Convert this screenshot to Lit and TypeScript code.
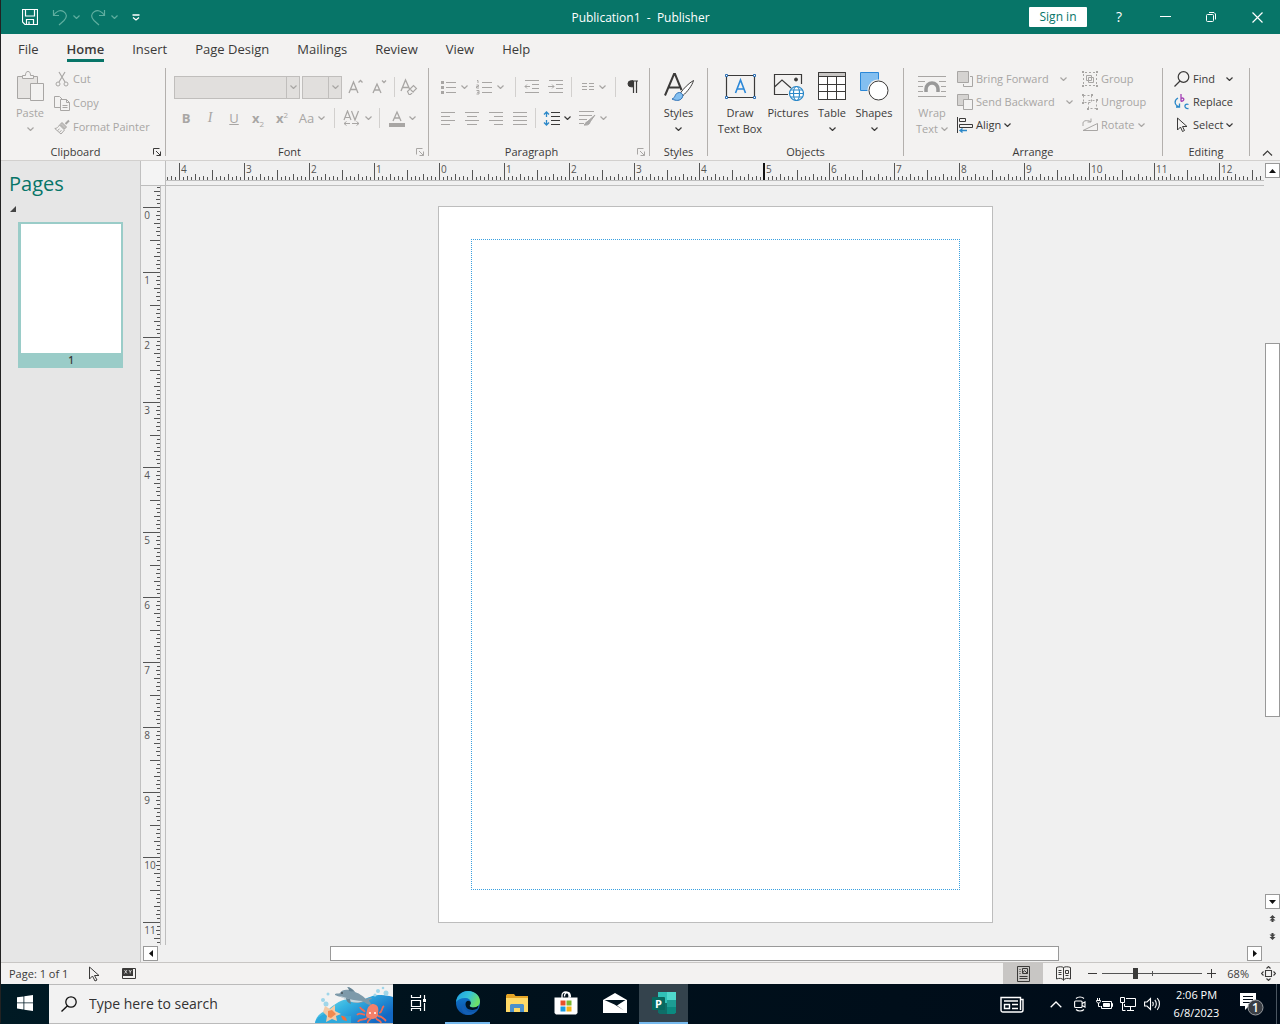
import { LitElement, html, svg, css, nothing } from "lit";
import { customElement, property, state } from "lit/decorators.js";
import { classMap } from "lit/directives/class-map.js";

const draw = (w: number, h: number, body: unknown) => html`<svg
  width=${w} height=${h} viewBox="0 0 ${w} ${h}" fill="none" stroke="currentColor"
  stroke-width="1" aria-hidden="true">${body}</svg>`;

const chevron = () => draw(7, 4, svg`<path d="M.5 .5 3.5 3.5 6.5 .5" stroke-width="1.2"/>`);

const launcher = () => draw(8, 8, svg`<path d="M.5 6.500V.5H6.500M3 3l4.500 4.500M7.500 3.500v4h-4"/>`);

const icons: Record<string, () => unknown> = {
  save: () => draw(16, 16, svg`<path d="M.5.5h15v15H3L.5 13zM3.500.500v6.500h9V.500M4.500 15.500v-5h7v5M7 12.500v3" stroke-width="1.2"/>`),
  undo: () => draw(16, 17, svg`<path d="M1.500 1v5.500H7M1.500 6.500C4 2.500 8 .500 11.500 2.500c4 2.500 3.500 6 .5 9L7 16" stroke-width="1.2"/>`),
  redo: () => draw(16, 17, svg`<path d="M14.500 1v5.500H9M14.500 6.500C12 2.500 8 .500 4.500 2.500c-4 2.500-3.500 6-.5 9L9 16" stroke-width="1.2"/>`),
  customize: () => draw(8, 7, svg`<path d="M.5 1h7M1 3.500l3 2.500 3-2.500" stroke-width="1.300"/>`),
  paste: () => draw(28, 32, svg`
    <path d="M2 7h19v6h-7v15H2z" fill="#e6e4e2" stroke="none"/>
    <path d="M6 6.500H1.500v22H14M17 6.500h4.500V13"/>
    <path d="M6.500 8.500v-3h3c0-3 1-4 2.500-4s2.500 1 2.500 4h3v3z" fill="#f3f2f1"/>
    <path d="M14.500 13.500h13v17h-13z" fill="#f3f2f1"/>`),
  cut: () => draw(16, 16, svg`<path d="M5 1l6 10M11 1 5 11" stroke-width="1.200"/><circle cx="4" cy="13" r="2"/><circle cx="12" cy="13" r="2"/>`),
  copy: () => draw(16, 16, svg`<path d="M6 12.500H.5v-11h5L8 4M6.500 4.500h6l3 3v8h-9zM12.500 4.500v3h3M8.500 10.500h5M8.500 12.500h5"/>`),
  painter: () => draw(16, 16, svg`<path d="M15 1.500 11.500 5" stroke-width="2"/><path d="M8 3.500l4.500 4.500-2 2L6 5.500z" fill="#c4c2c0"/><path d="M5.500 6 10.500 11 7 15 .8 9.500c2 0 3.500-1.500 4.700-3.500zM3.500 11.500l2-1.500M5.500 13l2-1.500"/>`),
  grow: () => draw(16, 16, svg`<path d="M1 14 5.500 3 10 14M2.500 10.500h6M10.500 3.500l2-2 2 2" stroke-width="1.300"/>`),
  shrink: () => draw(16, 16, svg`<path d="M1 14 5 5 9 14M2.500 11h5M10 1.500l2 2 2-2" stroke-width="1.300"/>`),
  clear: () => draw(18, 18, svg`<path d="M1 13 5.500 2 10 12M2.500 9.500h6" stroke-width="1.300"/><path d="M7.500 13.500l6-6 3 3-6 6H9zM10 11l3.500 3.500" fill="#f3f2f1" stroke-width="1.100"/>`),
  bullets: () => draw(17, 14, svg`<path d="M6 2.500h10M6 7.500h10M6 12.500h10"/><path d="M1 1h3v3H1zM1 6h3v3H1zM1 11h3v3H1z" fill="currentColor" stroke="none"/>`),
  numbers: () => draw(17, 16, svg`<path d="M6 3.500h10M6 8.500h10M6 13.500h10"/><path d="M1 1.500h1V4M.5 6h2v1.500h-2V9h2.500M.5 11.500h2.500v3.500H.5M1 13.300h2"/>`),
  outdent: () => draw(16, 14, svg`<path d="M1 .500h14M8 4.500h7M8 8.500h7M1 12.500h14M6 6.500H1M3 4.500l-2 2 2 2"/>`),
  indent: () => draw(16, 14, svg`<path d="M1 .500h14M8 4.500h7M8 8.500h7M1 12.500h14M0 6.500h6M4 4.500l2 2-2 2"/>`),
  columns: () => draw(14, 8, svg`<path d="M1 .500h5M1 3.500h5M1 6.500h5M8 .500h5M8 3.500h5M8 6.500h5"/>`),
  pilcrow: () => draw(11, 14, svg`<path d="M5 1h6M6.500 1v12M9.500 1v12" stroke-width="1.200"/><path d="M6 .800H4a3 3 0 0 0 0 6h2z" fill="currentColor"/>`),
  left: () => draw(14, 14, svg`<path d="M0 1.500h14M0 5.500h9M0 9.500h14M0 13.500h9"/>`),
  center: () => draw(14, 14, svg`<path d="M0 1.500h14M2 5.500h10M0 9.500h14M2 13.500h10"/>`),
  right: () => draw(14, 14, svg`<path d="M0 1.500h14M5 5.500h9M0 9.500h14M5 13.500h9"/>`),
  justify: () => draw(14, 14, svg`<path d="M0 1.500h14M0 5.500h14M0 9.500h14M0 13.500h14"/>`),
  spacing: () => draw(17, 15, svg`<path d="M8 1.500h9M8 5.500h9M8 9.500h9M8 13.500h9" stroke-width="1.200"/><path d="M3.500 1v5M3.500 9v5M1 3.500 3.500 1 6 3.500M1 11.500 3.500 14 6 11.500" stroke="#2b88c8" stroke-width="1.300"/>`),
  effects: () => draw(17, 16, svg`<path d="M0 1.500h15M0 5.500h13M0 9.500h8M0 13.500h5"/><path d="M16 5 8 12c-2 0-1 2.500-3 3 4 .500 6-1 6-3z" fill="#aaa"/>`),
  kerning: () => draw(18, 17, svg`<path d="M1 10 4.500 1 8 10M2.200 7.500h4.500M8.500 1l3.500 9L15.500 1" stroke-width="1.200"/><path d="M1 13.500h6M9 13.500h7M3.500 11.500l-2.500 2 2.500 2M13.500 11.500l2.500 2-2.500 2"/>`),
  fontColor: () => draw(16, 17, svg`<path d="M4 11 8 2l4 9M5.500 8h5" stroke-width="1.300"/><path d="M0 13h16v4H0z" fill="currentColor" stroke="none"/>`),
  styles: () => draw(32, 32, svg`<path d="M2 25.500 11 4h1l6.500 16M5.500 17.500h11" stroke-width="2"/>
    <path d="M30.500 10.500C26 13 20 19 17.500 23l2.500 2.500C24 22 29 16 30.500 10.500z" fill="#fff"/>
    <path d="M9 29c4-1 2-6 7.500-6.500 3 .500 4 3 2.500 5.500-2 3-6 3-10 1z" fill="#83bff0" stroke="#2b6fb5"/>`),
  textbox: () => draw(32, 28, svg`<path d="M2.500 3.500h28v22h-28z" stroke-width="1.200"/><path d="M11.500 21 16.500 8l5 13M13 17h7" stroke="#2b88d8" stroke-width="1.600"/>
    <path d="M1.500 2.500h2v2h-2zM29.500 2.500h2v2h-2zM1.500 24.500h2v2h-2zM29.500 24.500h2v2h-2z" fill="#fff" stroke="#2b6fb5"/>`),
  pictures: () => draw(32, 30, svg`<path d="M16 23.500H2.500v-20h27V13M2.500 16 10 9l9 8" stroke-width="1.200"/><circle cx="24" cy="8.500" r="1.500" fill="currentColor"/>
    <g stroke="#2b88c8" stroke-width="1.200"><circle cx="24.500" cy="22.500" r="7" fill="#fff"/><ellipse cx="24.500" cy="22.500" rx="3" ry="7"/><path d="M17.500 22.500h14M18.500 19h12M18.500 26h12"/></g>`),
  table: () => draw(28, 28, svg`<path d="M.5.500h27v27H.5z" fill="#fff"/><path d="M1 1h26v4H1z" fill="#c8c6c4" stroke="none"/><path d="M.5.500h27v27H.5zM.5 4.500h27M.5 12.500h27M.5 19.500h27M9.500 5v22.500M18.500 5v22.500"/>`),
  shapes: () => draw(29, 29, svg`<path d="M.5.500h18v18H.5z" fill="#83bff0" stroke="#2b88d8"/><circle cx="18.500" cy="18.500" r="11" fill="#f3f2f1" stroke="none"/><circle cx="18.500" cy="18.500" r="9.500" fill="#fff"/>`),
  wrap: () => draw(28, 24, svg`<path d="M0 2.500h28M0 7.500h7M21 7.500h7M0 12.500h5M23 12.500h5M0 17.500h5M23 17.500h5M0 22.500h28"/><path d="M8 18v-3a6 6 0 0 1 12 0v3" stroke-width="3.500" stroke="#999"/>`),
  forward: () => draw(16, 16, svg`<path d="M.5.500h11v11H.5z" fill="#d5d3d1"/><path d="M13 5.500h2.500v10h-9V13"/>`),
  backward: () => draw(16, 16, svg`<path d="M.5.500h11v11H.5z" fill="#d5d3d1"/><path d="M6.500 5.500h9v10h-9z" fill="#f3f2f1"/>`),
  align: () => draw(16, 16, svg`<path d="M.5 0v16M2.500 1.500h6v3h-6zM2.500 7.500h13v3h-13z"/><path d="M10 13.500H3M5.500 11.500l-2.500 2 2.500 2" stroke="#2b88c8" stroke-width="1.300"/>`),
  group: () => draw(16, 16, svg`<path d="M1.500 3v10M14.500 3v10M3 1.500h10M3 14.500h10" stroke-dasharray="2 2"/><path d="M4.500 4.500h5v5h-5zM6.500 6.500h5v5h-5z"/><path d="M0 0h2v2H0zM14 0h2v2h-2zM0 14h2v2H0zM14 14h2v2h-2z" fill="currentColor" stroke="none"/>`),
  ungroup: () => draw(16, 16, svg`<path d="M1.500 1.500h8v7h-8zM6.500 6.500h8v8h-8z" stroke-dasharray="2 2"/><path d="M0 0h2v2H0zM9 0h2v2H9zM0 8h2v2H0zM14 5h2v2h-2zM5 14h2v2H5zM14 14h2v2h-2z" fill="currentColor" stroke="none"/>`),
  rotate: () => draw(16, 14, svg`<path d="M1 12.500h14.500V5.500zM1 8V5c0-3 6-3 8-1M9 .500V4H5.500"/>`),
  find: () => draw(16, 16, svg`<circle cx="9.500" cy="6" r="5.300" stroke-width="1.200"/><path d="M6 10 .500 15.500" stroke-width="1.300"/>`),
  replace: () => draw(16, 16, svg`<g stroke-width="1.300"><path d="M7 0v7.500M7 4.500c3-2 4.500 2.800 0 2.800" stroke="#a33fb5"/><path d="M4 4C0 6 0 11 5 12.500M5.500 9.500v3.500H2" stroke="#2b88c8"/><path d="M14.500 10.500c-4-2-5.500 4.500 0 4" stroke="#2b88c8"/></g>`),
  select: () => draw(12, 15, svg`<path d="M1.500 1v12l3-3 2 4.500 2-1L6.500 9.500H11z"/>`),
  minimize: () => draw(11, 11, svg`<path d="M0 4.500h11"/>`),
  restore: () => draw(10, 10, svg`<rect x=".5" y="2.500" width="7" height="7" rx="1"/><path d="M3 .500h5l1.500 1.500v5.500"/>`),
  close: () => draw(11, 11, svg`<path d="M.5.500l10 10M10.500.500l-10 10" stroke-width="1.200"/>`),
  collapse: () => draw(11, 6, svg`<path d="M1 5.500 5.500 1 10 5.500" stroke-width="1.200"/>`),
  expander: () => draw(6, 6, svg`<path d="M6 0v6H0z" fill="#444" stroke="none"/>`),
  pointer: () => draw(12, 16, svg`<path d="M1.500 1v12l3-3 2.500 5 2-1-2.500-4.500H11z"/>`),
  xy: () => draw(14, 11, svg`<path d="M.5.500h13v10H.5z"/><path d="M1 1h10v7H1z" fill="currentColor" stroke="none"/><path d="M2.500 2l2.500 3.500M5 2 2.500 5.500M7 2l1.200 2L9.500 2M8.200 4v1.500" stroke="#fff" stroke-width=".7"/>`),
  single: () => draw(13, 16, svg`<path d="M.5.500h12v15H.5zM2.500 3.500h1M2.500 5.500h1M2.500 7.500h1M5.500 2.500h5v5h-5zM5.500 7l2-2.500 3 3M2.500 10.500h8M2.500 12.500h8"/>`),
  spread: () => draw(15, 15, svg`<path d="M7.500 1.500v13M7.500 1.500C6 .500 3 .500.500 1.500v11.500C3 12 6 12 7.500 14M7.500 1.500C9 .500 12 .500 14.500 1.500v11.500C12 12 9 12 7.500 14M2.500 4.500h3M2.500 6.500h3M2.500 8.500h3M9.500 4.500h3v3h-3zM9.500 9.500h3"/>`),
  minus: () => draw(9, 9, svg`<path d="M0 4.500h9"/>`),
  plus: () => draw(9, 9, svg`<path d="M0 4.500h9M4.500 0v9"/>`),
  fit: () => draw(15, 15, svg`<path d="M4.500 4.500h6v6h-6zM5.500 2.500l2-2 2 2M5.500 12.500l2 2 2-2M2.500 5.500l-2 2 2 2M12.500 5.500l2 2-2 2" stroke-width="1.100"/>`),
  windows: () => draw(16, 16, svg`<path d="M0 2.300 6.500 1.400v6.100H0zM7.300 1.300 16 0v7.500H7.300zM0 8.300h6.500v6.200L0 13.600zM7.300 8.300H16V16l-8.700-1.300z" fill="#fff" stroke="none"/>`),
  search: () => draw(16, 16, svg`<circle cx="10" cy="6" r="5.200" stroke-width="1.300"/><path d="M6.500 9.800.5 15.500" stroke-width="1.400"/>`),
  taskview: () => draw(18, 16, svg`<g stroke="#fff"><path d="M1.500 0v2.500h9V0M1.500 5.500h9v6h-9zM1.500 16v-2.500h9V16M14.500 0v4M14.500 8v8" stroke-width="1.200"/><path d="M13 4h3v3h-3z" fill="#fff" stroke="none"/></g>`),
  edge: () => draw(24, 24, svg`<defs>
      <linearGradient id="ea" x1="0" y1="0" x2="1" y2=".4"><stop offset="0" stop-color="#1b9de2"/><stop offset=".55" stop-color="#35c1d8"/><stop offset="1" stop-color="#6be06a"/></linearGradient>
      <linearGradient id="eb" x1="0" y1="0" x2="0" y2="1"><stop offset="0" stop-color="#1180d4"/><stop offset="1" stop-color="#0b4fa5"/></linearGradient></defs>
    <g stroke="none"><circle cx="12" cy="12" r="12" fill="url(#eb)"/>
    <path d="M.1 11C.8 4 6 0 12 0c7.500 0 12 5.200 12 10.200 0 4-3 6.300-6.500 6.300-3 0-4.500-1.300-3.500-2.500 1.800-2.200.6-6.500-4-7C5.500 6.600 1.500 8.500.1 11z" fill="url(#ea)"/>
    <path d="M8.500 12.500c-1.500 5 3 9.500 8.500 8.500 2-.4 3.500-1.200 4.700-2.300-3 3.600-6 5.200-9.700 5.300C5 23.500 4.500 15 8.500 12.500z" fill="#135fb4"/>
    <path d="M14 14c-1 1.200.5 2.500 3.500 2.500 2 0 3.800-.7 5-2l-1 3c-4 2.500-11.500 2-12-4C9.500 10 12 9 14.200 10.500c.8 1 .8 2.500-.2 3.500z" fill="#00131f"/></g>`),
  folder: () => draw(22, 18, svg`<g stroke="none"><path d="M0 1.500 1 0h7l1.500 2H22v4H0z" fill="#e5a526"/><path d="M0 4h22v14H0z" fill="#ffd966"/><path d="M4 18V11l1-1h12l1 1v7h-4v-4H8v4z" fill="#4b8fcb"/></g>`),
  store: () => draw(24, 24, svg`<path d="M8 7V4.500a3.500 3.500 0 0 1 7 0V7M10.500 5.500C10.500 2 12 1.500 13.500 1.500c2 0 3 2 3 5" stroke="#fff" stroke-width="1.300"/><g stroke="none"><path d="M.5 6.500h23V22l-1.500 1.500H2L.5 22z" fill="#fff"/><path d="M6.500 9.500h5v5h-5z" fill="#e8502a"/><path d="M12.500 9.500h5v5h-5z" fill="#7db72f"/><path d="M6.500 15.500h5v5h-5z" fill="#1b9de2"/><path d="M12.500 15.500h5v5h-5z" fill="#f7b516"/></g>`),
  mail: () => draw(24, 20, svg`<g stroke="none"><path d="M0 7 12 0l12 7v13H0z" fill="#fff"/><path d="M1.500 7h21L14 12.500l7 5-9.500-6z" fill="#00131f"/></g>`),
  publisher: () => draw(24, 22, svg`<g stroke="none"><path d="M6 0h9v11H6z" fill="#30c0b8"/><path d="M15 0h9v8h-9z" fill="#4fd8cd"/><path d="M15 8h9v7h-9z" fill="#1d9d94"/><path d="M6 11h9v11H7.500L6 20.500z" fill="#0f6e68"/><path d="M15 15h9v5.500L22.500 22H15z" fill="#0b8a80"/><rect y="5" width="13" height="13" rx="1" fill="#07685f"/></g><text x="3" y="15.500" fill="#fff" stroke="none" font-family="Open Sans, sans-serif" font-weight="700" font-size="11">P</text>`),
  news: () => draw(24, 17, svg`<g stroke="#fff" stroke-width="1.400"><path d="M20.500 3.500h2.500V14c0 1.500-1 2-2 2H3c-1.500 0-2-1-2-2V1.500h19.500V14"/><path d="M4 5h14M12 8.500h6M12 12.500h6M4.500 8.500h5v4h-5z"/></g>`),
  trayUp: () => draw(12, 7, svg`<path d="M.7 6.300 6 1l5.300 5.300" stroke="#fff" stroke-width="1.300"/>`),
  meet: () => draw(12, 16, svg`<g stroke="#fff" stroke-width="1.100"><rect x=".6" y="5" width="7.500" height="6.500" rx="1"/><path d="M8 7.500l3-1.500v5L8 9.500M2 2.500c2-2 6-2 8 0M2 13.500c2 2 6 2 8 0"/></g>`),
  battery: () => draw(17, 12, svg`<g stroke="#fff"><path d="M6 3.500h9.500v7H5.500V8M15.500 5.500h1v3h-1"/><path d="M7.500 5.500h6v3h-6z" fill="#fff"/><path d="M1.500 0v2M3.500 0v2M.5 2.500h4C4.500 4.500 3.500 5 2.500 5S.5 4.500.5 2.500zM2.500 5v3.500h2"/></g>`),
  network: () => draw(16, 14, svg`<g stroke="#fff"><path d="M6 1.500h9.500v8H4.500V7M7 13.500h7M10.500 9.500v4M.5.500h4v5h-4zM2.500 5.500v8h3"/></g>`),
  volume: () => draw(17, 14, svg`<g stroke="#fff" stroke-width="1.100"><path d="M.6 5h2.400L6.500 1.500v11L3 9H.6zM8.500 5c1 1 1 3 0 4M10.800 3c2 2 2 6 0 8M13.200 1.200c3 3 3 8.600 0 11.600"/></g>`),
  notify: () => draw(24, 24, svg`<path d="M0 1h16v13H9l-4 4v-4H0z" fill="#fff" stroke="none"/><path d="M3 4.500h10M3 7.500h10M3 10.500h7" stroke="#000b18"/><circle cx="15.500" cy="15.500" r="7.500" fill="#3b3f45" stroke="#9a9da1"/><text x="12" y="20" fill="#fff" stroke="none" font-family="Open Sans, sans-serif" font-weight="600" font-size="12">1</text>`),
  arrowUp: () => draw(7, 4, svg`<path d="M3.500 0 7 4H0z" fill="#111" stroke="none"/>`),
  arrowDown: () => draw(7, 4, svg`<path d="M3.500 4 7 0H0z" fill="#111" stroke="none"/>`),
  arrowLeft: () => draw(4, 7, svg`<path d="M0 3.500 4 0v7z" fill="#111" stroke="none"/>`),
  arrowRight: () => draw(4, 7, svg`<path d="M4 3.500 0 0v7z" fill="#111" stroke="none"/>`),
  pageUp: () => draw(7, 7, svg`<path d="M3.500 0 6.500 3H.5zM3.500 2.500l3 3H.5zM2.500 5h2v2h-2z" fill="#444" stroke="none"/>`),
  pageDown: () => draw(7, 7, svg`<path d="M2.500 0h2v2h-2zM.5 1.500h6l-3 3zM.5 4h6l-3 3z" fill="#444" stroke="none"/>`),
  sea: () => draw(78, 38, svg`<defs>
      <linearGradient id="sw" x1="0" y1="0" x2="1" y2=".6"><stop offset="0" stop-color="#8fe6ea"/><stop offset=".45" stop-color="#35b4e2"/><stop offset="1" stop-color="#1268c4"/></linearGradient></defs>
    <g stroke="none">
    <path d="M0 38c1-7 6-11 13-13C22 17 30 12 42 15c9 1 13-6 24-5 5 0 9 1 12 2v26z" fill="url(#sw)"/>
    <path d="M0 38c2-6 7-9 14-10 8-1 14 4 22 3v7z" fill="#2ea9dc"/>
    <g fill="#9fd6ea"><circle cx="8" cy="15" r="2"/><circle cx="13" cy="9" r="1.500"/><circle cx="11" cy="19" r="2.500"/><circle cx="63" cy="6" r="2"/><circle cx="68" cy="3" r="1.300"/><circle cx="71" cy="8" r="2.500"/><circle cx="60" cy="10" r="1.500"/></g>
    <path d="M20 9c2-1 4 0 5-1 2-4 8-4 12-2 7 2 11 5 14 8 3-1 5-2 6 0-2 0-3 1-3 2 1 1 2 2 2 4-3 0-5-2-7-3-6 2-13 1-18-3-3-2-7-2-11-4z" fill="#7d9aaa"/>
    <path d="M24 11c8 1 12 5 24 5-6 3-14 1-18-2-2-1-4-2-6-3z" fill="#c6d6dd"/>
    <path d="M34 6c0-2-1-3-2-4 3 0 6 2 8 5zM31 13c0 3 2 5 5 6l-1-5z" fill="#648394"/><circle cx="27" cy="8" r=".8" fill="#222"/>
    <path d="M10 21l5 3 5-4v6l6 3-5 2 1 5-5-2-6 3 1-6-4-4z" fill="#f4c9a4"/><path d="M13 26l4-1 4 4-5 4-3-1z" fill="#f08a50"/>
    <path d="M26 31c2-1 4 1 5 2l1 3-4-1z" fill="#f26d3d"/>
    <path d="M50 30c-3-1-6-3-8 0M52 33c-3 3-8 0-9 4M56 33c-1 2-4 3-3 5M61 33c1 3 5 2 5 5M50 27c-2-3-4-2-5-5M64 28c4-1 2-5 5-7M63 31c4 0 5 2 8 5" fill="none" stroke="#ef6a55" stroke-width="1.800"/>
    <path d="M51 30c1-4 1-9 6-11 6 0 7 4 6 9 1 3-1 5-5 6-4 0-7-1-7-4z" fill="#f4806a"/><circle cx="55" cy="28" r="1" fill="#fff"/><circle cx="60" cy="28" r="1" fill="#fff"/>
    </g>`),
};

const PX_PER_INCH = 65;
const PAGE_WIDTH = 555;
const PAGE_TOP = 21;

const tickLength = (i: number) =>
  i % 16 === 0 ? 17 : i % 8 === 0 ? 10 : i % 4 === 0 ? 6 : i % 2 === 0 ? 4 : 3;

const range = (from: number, to: number) =>
  Array.from({ length: Math.max(0, to - from + 1) }, (_, k) => from + k);

@customElement("page-ruler")
class PageRuler extends LitElement {
  @property({ type: Boolean }) vertical = false;
  @state() private span = 0;
  private observer?: ResizeObserver;

  static styles = css`
    :host { display: block; overflow: hidden; min-width: 0; min-height: 0; contain: size; }
    svg { display: block; }
    text { font: 10px "Open Sans", "Noto Sans", sans-serif; fill: #555; }
    .ticks { stroke: #555; stroke-width: 1; fill: none; }
    .edge { stroke: #bdbdbd; }
    .mark { stroke: #111; stroke-width: 2; }
  `;

  private measure = () => {
    this.span = this.vertical ? this.clientHeight : this.clientWidth;
  };

  connectedCallback() {
    super.connectedCallback();
    this.observer = new ResizeObserver(this.measure);
    this.observer.observe(this);
  }

  disconnectedCallback() {
    this.observer?.disconnect();
    super.disconnectedCallback();
  }

  firstUpdated() {
    this.measure();
  }

  render() {
    const span = this.span;
    if (!span) return nothing;
    const origin = this.vertical ? PAGE_TOP : Math.round((span - PAGE_WIDTH) / 2) + 1;
    const step = PX_PER_INCH / 16;
    const first = Math.ceil(-origin / step);
    const last = Math.floor((span - origin - 1) / step);
    const at = (i: number) => origin + Math.round(i * step) + 0.5;
    const inches = range(Math.ceil(first / 16), Math.floor((last - 3) / 16));
    if (this.vertical) {
      const path = range(first, last).map((i) => `M${19 - tickLength(i)} ${at(i)}H19`).join("");
      return html`<svg width="24" height=${span} viewBox="0 0 24 ${span}" role="img" aria-label="Vertical ruler">
        <path class="ticks" d=${path}></path>
        <path class="edge" d="M19.500 0V${span}"></path>
        ${inches.map((n) => svg`<text x=${n > 9 ? 9 : 6} y=${origin + n * PX_PER_INCH + 12} text-anchor="middle">${n}</text>`)}
      </svg>`;
    }
    const path = range(first, last).map((i) => `M${at(i)} ${19 - tickLength(i)}V19`).join("");
    return html`<svg width=${span} height="24" viewBox="0 0 ${span} 24" role="img" aria-label="Horizontal ruler">
      <path class="ticks" d=${path}></path>
      <path class="edge" d="M0 19.500H${span}"></path>
      <path class="mark" d="M${origin + 5 * PX_PER_INCH} 2V19"></path>
      ${inches.map((n) => svg`<text x=${origin + n * PX_PER_INCH + 2} y="12">${Math.abs(n)}</text>`)}
    </svg>`;
  }
}

const TABS = ["File", "Home", "Insert", "Page Design", "Mailings", "Review", "View", "Help"];

@customElement("app-root")
class AppRoot extends LitElement {
  @state() private tab = "Home";
  @state() private zoom = 33;

  static styles = css`
    :host {
      display: flex; flex-direction: column; height: 100vh; overflow: hidden;
      font: 12px/16px "Open Sans", "Noto Sans", sans-serif; color: #3b3a39; background: #f3f2f1;
    }
    * { box-sizing: border-box; }
    button { font: inherit; color: inherit; background: none; border: 0; padding: 0; margin: 0; }
    svg { display: block; flex: none; }
    .app { flex: 1; min-height: 0; display: flex; flex-direction: column; border-left: 1px solid #222; }

    .title { display: grid; grid-template-columns: 1fr auto 1fr; align-items: stretch; height: 34px; background: #077568; color: #fff; }
    .title h1 { margin: 0; padding-top: 1px; font: inherit; white-space: pre; align-self: center; }
    .quick, .window { display: flex; align-items: center; }
    .quick { padding-left: 17px; gap: 6px; }
    .window { justify-content: flex-end; }
    .quick button { display: flex; align-items: center; justify-content: center; height: 24px; min-width: 24px; }
    .quick button:disabled { color: #5fae9f; }
    .quick .split { display: flex; }
    .quick .split .drop { min-width: 8px; }
    .window button { display: grid; place-items: center; width: 46px; height: 34px; }
    .window .signin { width: 58px; height: 20px; margin-right: 9px; background: #fff; color: #077568; border-radius: 1px; }
    .qm { font-size: 14px; line-height: 16px; }

    .tabs { display: flex; gap: 28px; height: 32px; padding-left: 17px; font-size: 13px; }
    .tab { height: 28px; padding-top: 5px; border-bottom: 3px solid transparent; }
    .tab.on { font-weight: 600; border-color: #077568; }

    .ribbon {
      display: grid; grid-template-columns: 165px 263px 221px 58px 196px 259px 87px 1fr;
      padding: 2px 0 4px; border-bottom: 1px solid #d2d0ce; font-size: 11px;
    }
    .group { display: grid; grid-template-rows: 80px 8px; border-right: 1px solid #b3b0ad; min-width: 0; }
    .body { display: flex; min-width: 0; }
    .caption { display: grid; grid-template-columns: 1fr; line-height: 8px; align-items: center; text-align: center; }
    .caption.launch { grid-template-columns: 1fr 15px; }
    .caption h2 { margin: 0; font: inherit; }
    .caption button { justify-self: start; margin-left: 3px; }
    button:disabled { color: #a8a6a4; }

    .big { display: flex; flex-direction: column; align-items: center; padding-top: 2px; }
    .big .art { display: grid; place-items: center; height: 32px; margin-bottom: 3px; }
    .big .under { display: flex; align-items: center; gap: 3px; height: 16px; white-space: nowrap; }
    .list { display: flex; flex-direction: column; margin-top: -1px; }
    .item { display: flex; align-items: center; gap: 3px; height: 23px; white-space: nowrap; }
    .roomy .item { height: 24px; }
    .item .art { display: grid; place-items: center; width: 16px; }
    .item.far .tail { padding-left: 8px; }

    .rows { display: flex; flex-direction: column; gap: 7px; padding-top: 7px; }
    .row { display: flex; align-items: center; height: 24px; }
    .tool { display: flex; align-items: center; justify-content: center; gap: 4px; width: 24px; height: 24px; font-size: 13px; }
    .tool.wide { width: 36px; }
    .sep { width: 1px; height: 20px; background: #d2d0ce; margin: 0 4px; }
    .sep.near { margin: 0 3px; }
    .sep.tight { margin: 0 2px; }
    .combo { display: grid; height: 24px; align-items: center; color: #a8a6a4; }
    .combo select, .combo svg { grid-area: 1 / 1; }
    .combo select { appearance: none; opacity: 1; width: 100%; height: 23px; background: linear-gradient(to left, transparent 12px, #c0bebc 12px, #c0bebc 13px, transparent 13px), #e1dfdd; border: 1px solid #c0bebc; border-radius: 0; }
    .combo svg { justify-self: end; margin-right: 3px; pointer-events: none; }
    .face { width: 126px; margin-right: 2px; }
    .size { width: 40px; margin-right: 2px; }
    .bold { font-weight: 700; }
    .italic { font-family: "Liberation Serif", serif; font-style: italic; font-size: 14px; }
    .underline { text-decoration: underline; }
    sub, sup { font-size: 8px; line-height: 0; }
    .end { display: flex; align-items: flex-end; justify-content: flex-end; padding-right: 7px; }

    .work { flex: 1; min-height: 0; display: grid; grid-template-columns: 140px 25px 1fr 16px; grid-template-rows: 25px 1fr 17px; background: #f0f0f0; border-bottom: 1px solid #c8c6c4; }
    .pages { grid-row: 1 / 4; background: #e6e6e6; border-right: 1px solid #c0c0c0; padding: 10px 8px; }
    .pages h2 { margin: 0; font-size: 20px; line-height: 26px; font-weight: 400; color: #077568; }
    .pages .toggle { display: block; margin: 9px 0 10px 1px; }
    .thumb { display: flex; flex-direction: column; width: 105px; margin-left: 9px; padding: 2px 2px 0 3px; background: #9accc8; }
    .thumb .sheet { height: 129px; background: #fff; }
    .thumb .no { font-size: 10px; font-weight: 600; line-height: 15px; text-align: center; }
    .corner { border-right: 1px solid #bdbdbd; border-bottom: 1px solid #bdbdbd; background: #f4f4f4; }
    .top { border-bottom: 1px solid #bdbdbd; }
    .side { border-right: 1px solid #bdbdbd; }
    .canvas { display: flex; justify-content: center; align-items: flex-start; padding-top: 20px; overflow: hidden; }
    .page { flex: none; display: grid; width: 555px; height: 717px; padding: 32px; background: #fff; border: 1px solid #bdbdbd; }
    .margins { border: 1px dotted #3aa0e0; }
    .vbar { grid-column: 4; grid-row: 1 / 4; display: flex; flex-direction: column; padding: 2px 0 17px 1px; }
    .hbar { grid-column: 2 / 4; display: flex; padding: 1px 2px 0; }
    .arrow { display: grid; place-items: center; width: 15px; height: 15px; border: 1px solid #999; background: #fff; flex: none; }
    .jump { display: grid; place-items: center; height: 18px; flex: none; }
    .track { flex: 1; display: grid; min-width: 0; min-height: 0; }
    .vbar .track { grid-template-rows: 165fr 375fr 177fr; }
    .hbar .track { grid-template-columns: 172fr 729fr 188fr; }
    .slide { border: 1px solid #999; background: #fff; }
    .vbar .slide { grid-row: 2; }
    .hbar .slide { grid-column: 2; height: 15px; }

    .status { display: flex; align-items: center; height: 21px; padding: 0 4px 0 8px; font-size: 11px; }
    .status .pointer { margin-left: 20px; }
    .status .xy { margin-left: 22px; }
    .status .view { display: grid; place-items: center; width: 40px; height: 21px; }
    .status .view.on { background: #c8c6c4; }
    .status .right { margin-left: auto; display: flex; align-items: center; }
    .status .step { padding: 0 5px; }
    .zoom { appearance: none; width: 100px; height: 15px; margin: 0; background: linear-gradient(#555, #555) center / 100% 1px no-repeat, linear-gradient(#555, #555) center / 1px 5px no-repeat; }
    .zoom::-webkit-slider-thumb { appearance: none; width: 5px; height: 11px; background: #3b3a39; border: 0; }
    .percent { width: 28px; text-align: right; margin-right: 12px; }

    .taskbar { display: flex; align-items: stretch; height: 40px; background: linear-gradient(90deg, #001a24, #00111c 40%, #000b18); color: #fff; }
    .taskbar .app-btn { display: grid; place-items: center; width: 49px; height: 40px; }
    .start { border-left: 1px solid #222; }
    .find { flex: none; display: flex; align-items: center; width: 344px; background: #f2f2f2; border: solid #bbb; border-width: 1px 0; color: #111; padding-left: 12px; gap: 12px; }
    .find input { flex: 1; min-width: 0; border: 0; background: none; padding: 0; font: 14px/20px "Open Sans", "Noto Sans", sans-serif; color: #333; outline: none; }
    .find input::placeholder { color: #333; opacity: 1; }
    .apps { display: flex; padding-left: 1px; }
    .app-btn { border-bottom: 2px solid transparent; }
    .app-btn.open { border-image: linear-gradient(90deg, transparent 4px, #76b9ed 4px, #76b9ed calc(100% - 4px), transparent calc(100% - 4px)) 2; border-style: solid; border-width: 0 0 2px; }
    .app-btn.active { background: #34434d; border-bottom-color: #76b9ed; }
    .tray { margin-left: auto; display: flex; align-items: center; }
    .tray .t { display: grid; place-items: center; width: 24px; height: 40px; }
    .tray .t.news { margin-right: 20px; }
    .clock { width: 65px; text-align: center; line-height: 18px; font-size: 11px; }
    .tray .t.notify { width: 46px; }
    .desk { width: 4px; height: 40px; border-left: 1px solid #4a5560; margin-left: 1px; }
  `;

  private tool(name: string, label: string, opts: { drop?: boolean; on?: boolean; body?: unknown; cls?: string } = {}) {
    return html`<button class=${`tool ${opts.drop ? "wide" : ""} ${opts.cls ?? ""}`} aria-label=${label} ?disabled=${!opts.on}>
      ${opts.body ?? icons[name]()}${opts.drop ? chevron() : nothing}
    </button>`;
  }

  private item(name: string, label: string, opts: { drop?: boolean; far?: boolean; on?: boolean } = {}) {
    return html`<button class=${classMap({ item: true, far: !!opts.far })} ?disabled=${!opts.on}>
      <span class="art">${icons[name]()}</span><span>${label}</span>${opts.drop ? html`<span class="tail">${chevron()}</span>` : nothing}
    </button>`;
  }

  private big(name: string, label: string, width: number, second: unknown, on = true) {
    return html`<button class="big" style="width:${width}px" ?disabled=${!on}>
      <span class="art">${icons[name]()}</span><span>${label}</span><span class="under">${second}</span>
    </button>`;
  }

  private group(label: string, body: unknown, launch?: "on" | "off") {
    return html`<section class="group">
      <div class="body">${body}</div>
      <div class=${classMap({ caption: true, launch: !!launch })}><h2>${label}</h2>${launch
        ? html`<button aria-label="${label} settings" ?disabled=${launch === "off"}>${launcher()}</button>`
        : nothing}</div>
    </section>`;
  }

  private titleBar() {
    return html`<header class="title">
      <div class="quick">
        <button aria-label="Save">${icons.save()}</button>
        <span class="split"><button disabled aria-label="Undo">${icons.undo()}</button><button class="drop" disabled aria-label="Undo list">${chevron()}</button></span>
        <span class="split"><button disabled aria-label="Redo">${icons.redo()}</button><button class="drop" disabled aria-label="Redo list">${chevron()}</button></span>
        <button aria-label="Customize Quick Access Toolbar">${icons.customize()}</button>
      </div>
      <h1>Publication1  -  Publisher</h1>
      <div class="window">
        <button class="signin">Sign in</button>
        <button aria-label="Help"><span class="qm">?</span></button>
        <button aria-label="Minimize">${icons.minimize()}</button>
        <button aria-label="Restore">${icons.restore()}</button>
        <button aria-label="Close">${icons.close()}</button>
      </div>
    </header>`;
  }

  private ribbon() {
    return html`<div class="ribbon">
      ${this.group("Clipboard", html`
        ${this.big("paste", "Paste", 58, chevron(), false)}
        <div class="list roomy" style="margin-left:-5px">
          ${this.item("cut", "Cut")}${this.item("copy", "Copy")}${this.item("painter", "Format Painter")}
        </div>`, "on")}
      ${this.group("Font", html`<div class="rows" style="padding-left:8px">
        <div class="row">
          <label class="combo face"><select disabled aria-label="Font"></select>${chevron()}</label>
          <label class="combo size"><select disabled aria-label="Font size"></select>${chevron()}</label>
          ${this.tool("grow", "Increase font size")}${this.tool("shrink", "Decrease font size")}
          <span class="sep tight"></span>
          ${this.tool("clear", "Clear formatting")}
        </div>
        <div class="row">
          ${this.tool("", "Bold", { body: "B", cls: "bold" })}
          ${this.tool("", "Italic", { body: "I", cls: "italic" })}
          ${this.tool("", "Underline", { body: "U", cls: "underline" })}
          ${this.tool("", "Subscript", { body: html`<span><b>x</b><sub>2</sub></span>` })}
          ${this.tool("", "Superscript", { body: html`<span><b>x</b><sup>2</sup></span>` })}
          ${this.tool("", "Change case", { body: "Aa", drop: true })}
          <span class="sep"></span>
          ${this.tool("kerning", "Character spacing", { drop: true })}
          <span class="sep"></span>
          ${this.tool("fontColor", "Font color", { drop: true })}
        </div>
      </div>`, "off")}
      ${this.group("Paragraph", html`<div class="rows" style="padding-left:7px">
        <div class="row">
          ${this.tool("bullets", "Bullets", { drop: true })}
          ${this.tool("numbers", "Numbering", { drop: true })}
          <span class="sep" style="margin-left:7px"></span>
          ${this.tool("outdent", "Decrease indent")}${this.tool("indent", "Increase indent")}
          <span class="sep near"></span>
          ${this.tool("columns", "Columns", { drop: true })}
          <span class="sep"></span>
          ${this.tool("pilcrow", "Special characters", { on: true })}
        </div>
        <div class="row">
          ${this.tool("left", "Align left")}${this.tool("center", "Center")}${this.tool("right", "Align right")}${this.tool("justify", "Justify")}
          <span class="sep near"></span>
          ${this.tool("spacing", "Line spacing", { drop: true, on: true })}
          ${this.tool("effects", "Paragraph effects", { drop: true })}
        </div>
      </div>`, "off")}
      ${this.group("Styles", this.big("styles", "Styles", 57, chevron()))}
      ${this.group("Objects", html`<div class="body" style="padding-left:7px">
        ${this.big("textbox", "Draw", 50, "Text Box")}
        ${this.big("pictures", "Pictures", 46, nothing)}
        ${this.big("table", "Table", 42, chevron())}
        ${this.big("shapes", "Shapes", 42, chevron())}
      </div>`)}
      ${this.group("Arrange", html`<div class="body" style="padding-left:3px">
        ${this.big("wrap", "Wrap", 50, html`Text${chevron()}`, false)}
        <div class="list" style="width:125px">
          ${this.item("forward", "Bring Forward", { drop: true, far: true })}
          ${this.item("backward", "Send Backward", { drop: true, far: true })}
          ${this.item("align", "Align", { drop: true, on: true })}
        </div>
        <div class="list">
          ${this.item("group", "Group")}${this.item("ungroup", "Ungroup")}${this.item("rotate", "Rotate", { drop: true })}
        </div>
      </div>`)}
      ${this.group("Editing", html`<div class="list" style="padding-left:11px">
        ${this.item("find", "Find", { drop: true, far: true, on: true })}
        ${this.item("replace", "Replace", { on: true })}
        ${this.item("select", "Select", { drop: true, on: true })}
      </div>`)}
      <div class="end"><button aria-label="Collapse the ribbon">${icons.collapse()}</button></div>
    </div>`;
  }

  private workspace() {
    return html`<main class="work">
      <aside class="pages">
        <h2>Pages</h2>
        <button class="toggle" aria-label="Collapse section">${icons.expander()}</button>
        <button class="thumb" aria-label="Page 1"><span class="sheet"></span><span class="no">1</span></button>
      </aside>
      <div class="corner"></div>
      <page-ruler class="top"></page-ruler>
      <page-ruler class="side" vertical></page-ruler>
      <div class="canvas"><div class="page"><div class="margins"></div></div></div>
      <div class="vbar">
        <button class="arrow" aria-label="Scroll up">${icons.arrowUp()}</button>
        <div class="track"><div class="slide"></div></div>
        <button class="arrow" aria-label="Scroll down">${icons.arrowDown()}</button>
        <button class="jump" aria-label="Previous page">${icons.pageUp()}</button>
        <button class="jump" aria-label="Next page">${icons.pageDown()}</button>
      </div>
      <div class="hbar">
        <button class="arrow" aria-label="Scroll left">${icons.arrowLeft()}</button>
        <div class="track"><div class="slide"></div></div>
        <button class="arrow" aria-label="Scroll right">${icons.arrowRight()}</button>
      </div>
    </main>`;
  }

  private statusBar() {
    return html`<footer class="status">
      <span>Page: 1 of 1</span>
      <span class="pointer">${icons.pointer()}</span>
      <span class="xy">${icons.xy()}</span>
      <div class="right">
        <button class="view on" aria-label="Single page">${icons.single()}</button>
        <button class="view" aria-label="Two-page spread">${icons.spread()}</button>
        <button class="step" aria-label="Zoom out">${icons.minus()}</button>
        <input class="zoom" type="range" min="0" max="100" aria-label="Zoom" .value=${String(this.zoom)}
          @input=${(e: Event) => (this.zoom = Number((e.target as HTMLInputElement).value))} />
        <button class="step" aria-label="Zoom in">${icons.plus()}</button>
        <span class="percent">68%</span>
        <button aria-label="Fit page">${icons.fit()}</button>
      </div>
    </footer>`;
  }

  private taskbar() {
    return html`<nav class="taskbar">
      <button class="app-btn start" aria-label="Start">${icons.windows()}</button>
      <label class="find">${icons.search()}<input placeholder="Type here to search" aria-label="Type here to search" />${icons.sea()}</label>
      <div class="apps">
        <button class="app-btn" aria-label="Task view">${icons.taskview()}</button>
        <button class="app-btn open" aria-label="Microsoft Edge">${icons.edge()}</button>
        <button class="app-btn" aria-label="File Explorer">${icons.folder()}</button>
        <button class="app-btn" aria-label="Microsoft Store">${icons.store()}</button>
        <button class="app-btn" aria-label="Mail">${icons.mail()}</button>
        <button class="app-btn active" aria-label="Publisher">${icons.publisher()}</button>
      </div>
      <div class="tray">
        <button class="t news" aria-label="News">${icons.news()}</button>
        <button class="t" aria-label="Show hidden icons">${icons.trayUp()}</button>
        <button class="t" aria-label="Meet now">${icons.meet()}</button>
        <button class="t" aria-label="Battery">${icons.battery()}</button>
        <button class="t" aria-label="Network">${icons.network()}</button>
        <button class="t" aria-label="Volume">${icons.volume()}</button>
        <button class="clock">2:06 PM<br />6/8/2023</button>
        <button class="t notify" aria-label="Notifications">${icons.notify()}</button>
        <span class="desk"></span>
      </div>
    </nav>`;
  }

  render() {
    return html`
      <div class="app">
        ${this.titleBar()}
        <div class="tabs">
          ${TABS.map((t) => html`<button class=${classMap({ tab: true, on: t === this.tab })} @click=${() => (this.tab = t)}>${t}</button>`)}
        </div>
        ${this.ribbon()}
        ${this.workspace()}
        ${this.statusBar()}
      </div>
      ${this.taskbar()}
    `;
  }
}
